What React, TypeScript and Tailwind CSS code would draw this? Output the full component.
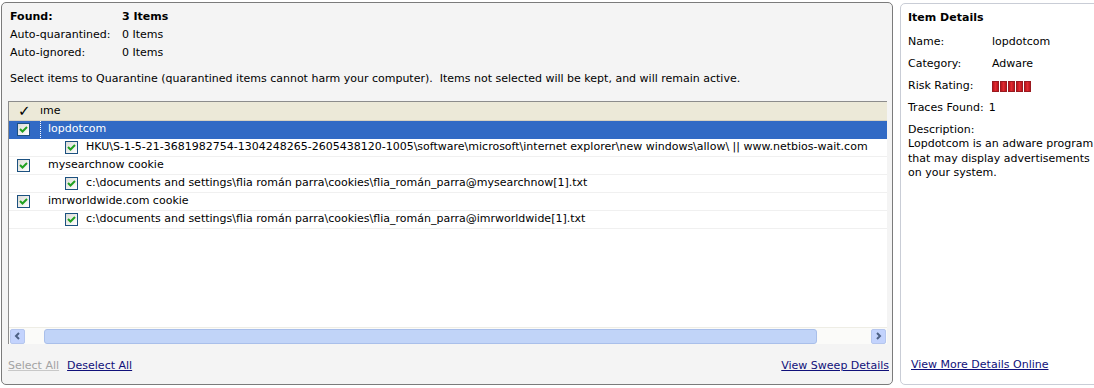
import React from 'react';

type Row = {
  label: string;
  level: 0 | 1;
  selected?: boolean;
};

const rows: Row[] = [
  { label: 'lopdotcom', level: 0, selected: true },
  {
    label:
      'HKU\\S-1-5-21-3681982754-1304248265-2605438120-1005\\software\\microsoft\\internet explorer\\new windows\\allow\\ || www.netbios-wait.com',
    level: 1,
  },
  { label: 'mysearchnow cookie', level: 0 },
  {
    label: 'c:\\documents and settings\\flia román parra\\cookies\\flia_román_parra@mysearchnow[1].txt',
    level: 1,
  },
  { label: 'imrworldwide.com cookie', level: 0 },
  {
    label: 'c:\\documents and settings\\flia román parra\\cookies\\flia_román_parra@imrworldwide[1].txt',
    level: 1,
  },
];

const CheckBox: React.FC = () => (
  <div className="w-[13px] h-[13px] shrink-0 border border-[#1c5180] bg-gradient-to-br from-[#dcdcd7] to-white flex items-center justify-center">
    <svg width="9" height="9" viewBox="0 0 9 9">
      <path d="M1 4 L3.5 6.5 L8 2" fill="none" stroke="#21a121" strokeWidth="2" />
    </svg>
  </div>
);

const App: React.FC = () => {
  return (
    <div className="flex w-[1094px] h-[388px] bg-white pt-[2px] pl-[1px] gap-[7px] overflow-hidden font-['DejaVu_Sans',sans-serif] text-[11px] text-black">
      {/* main sweep results panel */}
      <div className="w-[892px] h-[383px] shrink-0 border border-[#7b7b7b] rounded-[5px] bg-[#f4f4f4] flex flex-col">
        <div className="pl-[8px] pt-[5px]">
          <div className="flex h-[18px] items-center font-bold">
            <span className="w-[112px]">Found:</span>
            <span>3 Items</span>
          </div>
          <div className="flex h-[18px] items-center">
            <span className="w-[112px]">Auto-quarantined:</span>
            <span>0 Items</span>
          </div>
          <div className="flex h-[18px] items-center">
            <span className="w-[112px]">Auto-ignored:</span>
            <span>0 Items</span>
          </div>
          <div className="flex h-[18px] items-center mt-[8px] whitespace-pre">
            Select items to Quarantine (quarantined items cannot harm your computer).  Items not selected will be kept, and will remain active.
          </div>
        </div>

        {/* list */}
        <div className="ml-[6px] mt-[13px] w-[879px] h-[243px] border-l border-t border-[#8c8c8c] bg-white flex flex-col overflow-hidden">
          <div className="h-[19px] shrink-0 bg-[#ece9d8] border-b border-[#d6d2c2] flex items-center">
            <span className="w-[31px] pl-[9px] text-[15px] leading-none">✓</span>
            <span>ıme</span>
          </div>
          {rows.map((r, i) => (
            <div
              key={i}
              className={
                'h-[18px] shrink-0 flex items-center whitespace-nowrap border-b ' +
                (r.selected ? 'bg-[#316ac5] text-white border-[#316ac5]' : 'border-[#f0f0f0]')
              }
            >
              <div className={r.level === 0 ? 'pl-[8px] w-[31px]' : 'pl-[56px] w-[69px]'}>
                <CheckBox />
              </div>
              {r.selected ? (
                <span className="h-full flex items-center border-l border-dotted border-white pl-[7px]">{r.label}</span>
              ) : (
                <span className="pl-[8px]">{r.label}</span>
              )}
            </div>
          ))}
          <div className="flex-1" />
          {/* horizontal scrollbar */}
          <div className="h-[17px] shrink-0 bg-[#fbfbf9] flex items-center px-[1px] border-t border-[#eeede5]">
            <div className="w-[15px] h-[15px] rounded-[2px] bg-[#c3d3fd] border border-[#b5c6ee] flex items-center justify-center">
              <svg width="7" height="8" viewBox="0 0 7 8">
                <path d="M5 1 L2 4 L5 7" fill="none" stroke="#4d6185" strokeWidth="2" />
              </svg>
            </div>
            <div className="flex-1 flex items-center pl-[19px] pr-[54px]">
              <div className="h-[15px] flex-1 rounded-[3px] bg-[#c1d4f8] border border-[#a9bfea]" />
            </div>
            <div className="w-[15px] h-[15px] rounded-[2px] bg-[#c3d3fd] border border-[#b5c6ee] flex items-center justify-center">
              <svg width="7" height="8" viewBox="0 0 7 8">
                <path d="M2 1 L5 4 L2 7" fill="none" stroke="#4d6185" strokeWidth="2" />
              </svg>
            </div>
          </div>
        </div>

        <div className="flex-1 flex items-end pb-[10px] pl-[6px] pr-[3px]">
          <span className="text-[#a3a3a3] underline decoration-[#c8c8c8]">Select All</span>
          <span className="ml-[8px] text-[#10107a] underline">Deselect All</span>
          <span className="ml-auto text-[#10107a] underline">View Sweep Details</span>
        </div>
      </div>

      {/* item details panel */}
      <div className="w-[200px] h-[382px] shrink-0 mt-[1px] border border-[#c9cdd6] rounded-[5px] bg-white flex flex-col pl-[7px] pt-[6px]">
        <div className="font-bold h-[17px] flex items-center">Item Details</div>
        <div className="mt-[4px] flex flex-col">
          <div className="flex h-[22px] items-center">
            <span className="w-[84px]">Name:</span>
            <span>lopdotcom</span>
          </div>
          <div className="flex h-[22px] items-center">
            <span className="w-[84px]">Category:</span>
            <span>Adware</span>
          </div>
          <div className="flex h-[22px] items-center">
            <span className="w-[84px]">Risk Rating:</span>
            <span className="flex gap-[1px]">
              {[0, 1, 2, 3, 4].map((n) => (
                <span
                  key={n}
                  className="w-[7px] h-[11px] bg-gradient-to-r from-[#b8141c] via-[#e02a30] to-[#b8141c] border border-[#9a1a20]"
                />
              ))}
            </span>
          </div>
          <div className="flex h-[22px] items-center">
            <span>Traces Found:</span>
            <span className="ml-[5px]">1</span>
          </div>
          <div className="h-[22px] flex items-center">Description:</div>
          <div className="leading-[14.5px] whitespace-nowrap -mt-[4px]">
            Lopdotcom is an adware program
            <br />
            that may display advertisements
            <br />
            on your system.
          </div>
        </div>
        <div className="flex-1 flex items-end pb-[11px] pl-[3px]">
          <span className="text-[#10107a] underline">View More Details Online</span>
        </div>
      </div>
    </div>
  );
};

export default App;
